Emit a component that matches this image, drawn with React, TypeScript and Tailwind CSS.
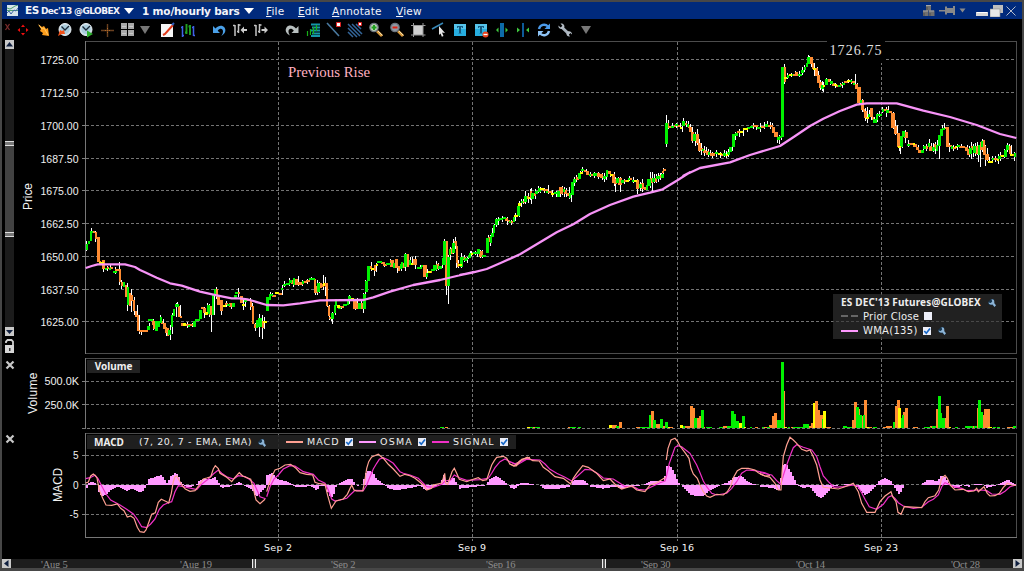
import React from 'react';

type Tone = 'g' | 'o' | 'y';
const TONES: Record<Tone, string> = { g: '#00f000', o: '#ff8c32', y: '#ffff00' };

// Each block of series data is stored in thirds of a pixel, relative to its own origin.
interface Block {
  ox: number;
  oy: number;
  data: string;
}

// tone,x0,x1,y0,y1
const CANDLES: Block[] = [
  {
    ox: 0,
    oy: 200,
    data: `g,257,263,132,150 g,263,269,124,133 g,269,275,93,122 g,272,280,93,99 o,279,286,94,100 o,285,292,95,116 o,292,299,112,187 o,296,301,183,189 y,298,311,186,192 o,307,314,180,206 g,315,321,203,208 o,320,327,200,207 g,326,331,205,209 o,330,340,201,208 g,340,350,212,218 o,345,356,206,212 o,356,363,207,247 o,363,369,245,257 g,369,375,247,262 o,375,382,255,290 g,381,387,260,314 o,387,393,280,318 o,393,399,284,304 o,398,406,301,333 o,405,412,333,352 o,411,418,344,393 o,417,443,390,396 g,442,449,378,390 g,445,458,357,363 o,455,462,360,375 o,459,466,363,388 g,466,473,364,392 g,473,480,362,380 g,480,486,350,368 o,484,490,362,372 o,488,497,370,386 o,494,501,380,398 o,500,506,385,408 g,505,512,390,405 g,513,519,345,382 g,518,525,328,347 g,524,536,312,320 o,534,540,318,350 o,539,546,347,353 o,543,550,368,378 y,549,559,370,377 o,558,570,373,379 g,564,570,374,380 o,570,580,373,379 g,580,587,362,380 g,585,600,357,362 g,598,606,330,358 o,604,613,320,327 o,610,618,325,340 y,616,625,337,345 g,622,630,315,342 o,628,636,318,345 g,636,642,283,345 g,642,648,268,288 o,648,655,268,290 o,652,660,285,315 o,660,668,300,333 y,668,678,316,322 o,675,684,309,315 g,682,689,311,317 o,687,697,309,322 g,696,704,310,320 g,702,710,284,297 g,705,714,276,282 o,713,720,277,283`,
  },
  {
    ox: 240,
    oy: 200,
    data: `o,0,8,288,308 y,5,16,312,318 g,11,20,297,306 o,18,30,297,303 o,30,37,300,320 o,36,42,318,372 o,42,48,372,385 g,47,54,360,385 o,52,57,366,380 g,55,65,353,380 o,65,71,362,385 y,70,80,362,368 g,79,86,290,333 g,86,92,283,300 g,92,100,283,288 o,97,107,285,292 y,105,118,277,283 o,117,126,278,283 g,124,130,263,270 g,129,138,251,258 g,138,150,248,254 g,148,156,240,250 o,154,160,240,252 g,160,166,235,255 o,165,175,237,255 o,175,190,245,255 g,185,191,244,252 o,190,200,243,250 o,197,210,240,247 g,208,224,234,240 o,222,229,238,278 o,228,234,259,280 g,232,240,250,275 o,237,247,248,265 o,245,250,252,262 y,249,256,250,257 o,255,264,250,262 o,258,265,252,318 o,264,270,318,348 o,268,275,350,358 g,274,281,338,358 g,281,287,315,340 g,284,291,298,317 y,290,300,315,325 g,295,303,321,326 o,301,312,318,324 g,310,322,313,318 g,320,328,300,315 g,325,334,288,302 y,332,342,293,299 o,340,350,300,328 o,350,358,310,328 g,355,363,308,328 o,363,371,310,328 g,370,377,282,328 g,376,383,242,275 g,380,389,198,243 o,386,396,198,208 y,393,402,203,209 o,402,409,195,213 y,408,414,192,198 g,410,425,184,190 o,423,434,187,193 o,430,440,191,198 g,437,452,189,195 o,450,462,180,200 g,460,466,188,203 o,465,475,178,204 o,473,481,197,212 g,480,486,192,208 g,484,490,185,205 o,489,493,190,205 g,492,500,162,200 o,499,508,163,200 g,506,513,180,195 y,512,520,190,196 o,518,530,178,196 g,530,545,200,207 g,543,550,195,202 o,550,560,195,232 g,557,565,220,230 y,564,572,213,218 o,570,574,212,217 g,573,585,208,214 g,580,590,195,210 o,588,597,193,207 g,594,606,198,206 g,605,617,175,195 g,609,617,122,180 o,616,624,123,258 g,622,629,170,258 g,628,634,148,165 o,633,637,145,162 g,636,644,128,160 o,642,651,122,138 o,647,654,138,190 o,652,658,188,200 y,655,665,192,198 g,662,669,172,200 o,668,674,173,180 g,673,680,176,182 o,678,685,174,181 g,684,692,168,174 g,688,700,158,164 g,700,713,155,162 g,712,720,147,163`,
  },
  {
    ox: 460,
    oy: 130,
    data: `g,0,7,382,410 y,0,6,402,408 g,6,12,380,387 o,10,18,382,388 g,16,25,383,389 g,24,33,374,380 y,32,39,370,376 g,38,52,366,372 g,52,60,358,372 o,58,68,362,380 g,66,78,375,382 g,78,86,323,370 o,84,90,320,336 g,90,95,318,338 g,93,101,308,322 g,99,106,285,308 g,105,114,268,285 g,112,120,268,274 g,118,130,265,271 g,128,138,260,266 o,134,145,263,272 o,143,150,270,276 g,148,154,273,278 o,152,160,272,278 g,158,165,262,275 y,163,173,255,262 g,172,179,228,258 y,175,183,220,228 g,182,190,214,220 o,188,194,213,220 g,192,200,198,215 o,199,206,198,206 y,204,211,201,207 o,209,215,183,203 g,214,222,188,207 o,220,227,190,198 g,225,235,183,192 g,233,242,174,186 y,240,252,175,181 o,250,264,178,184 g,257,263,182,190 o,263,275,184,190 y,274,283,188,193 g,282,292,185,190 g,290,299,184,200 o,298,310,170,192 g,310,314,178,186 o,312,322,180,192 o,320,330,188,198 g,328,334,188,204 g,333,341,155,195 g,340,349,148,158 o,348,356,142,150 g,355,362,130,148 y,360,369,125,132 g,364,373,117,123 o,372,379,119,126 o,378,388,124,134 g,387,394,133,138 o,393,401,132,138 g,400,410,130,137 o,410,420,130,140 o,420,430,132,144 g,430,437,137,148 g,437,445,120,140 o,443,452,124,132 y,450,460,131,137 o,456,464,132,160 o,462,470,147,162 g,467,477,145,160 o,475,487,145,165 g,483,491,151,158 o,489,499,150,157 y,497,507,150,156 g,505,511,143,150 o,508,517,143,150 g,516,523,149,155 y,521,530,149,155 o,528,538,150,178 g,538,545,163,175 o,543,553,160,178 o,551,558,172,180 g,557,565,165,180 g,562,572,148,168 o,571,579,144,160 g,577,584,145,157 o,583,590,143,155 g,588,600,138,148 o,596,606,134,143 g,604,611,133,143 o,607,613,122,129 o,610,618,117,124`,
  },
  {
    ox: 650,
    oy: 40,
    data: `g,46,53,248,312 o,52,58,250,260 o,55,65,257,263 g,64,72,257,263 o,71,77,254,260 g,76,83,252,258 o,82,91,254,262 y,90,97,261,267 g,95,105,243,258 o,105,111,248,255 g,110,116,252,260 o,114,120,255,265 o,117,125,262,275 o,123,131,275,302 g,130,138,283,302 o,138,146,281,310 o,144,153,308,332 o,152,160,323,331 g,155,162,327,334 o,160,169,331,340 o,168,176,333,345 g,174,181,337,345 o,180,195,340,347 g,195,204,335,341 y,203,215,340,346 o,212,221,341,348 g,219,229,339,347 y,228,234,342,348 g,232,239,335,345 g,238,246,320,337 g,246,255,283,320 g,254,264,278,288 o,262,270,273,279 y,269,280,272,278 y,280,293,264,270 g,291,300,261,267 g,299,310,257,263 o,309,324,256,262 g,322,333,260,267 o,332,345,257,264 g,345,353,252,262 o,353,368,254,262 o,366,375,262,278 o,373,383,277,292 g,380,390,292,299 g,388,396,288,295 g,393,401,82,290 o,399,407,80,104 o,402,407,102,125 y,402,411,110,118 g,410,418,106,113 y,417,425,103,109 g,424,430,103,108 o,428,436,102,108 o,435,445,95,107 g,444,456,101,108 g,454,463,90,100 g,461,469,80,90 g,467,474,70,82 g,472,481,52,73 o,478,488,52,73 o,486,493,70,86 y,490,497,83,89 o,494,503,84,108 o,500,510,104,130 o,508,517,126,144 g,513,521,136,146 y,518,526,134,140 g,525,535,118,134 o,533,541,118,126 g,540,548,124,132 o,545,555,129,138 y,553,560,133,139 o,559,566,134,140 g,563,572,134,140 o,571,577,133,139 g,576,585,128,134 o,583,595,123,129 y,592,600,120,126 g,598,606,120,126 o,604,614,122,130 g,610,616,128,134 o,614,623,132,146 o,622,632,142,190 g,629,635,180,188 o,632,641,180,210 o,639,646,208,216 o,643,652,213,235 y,648,656,232,238 g,654,660,223,232 o,659,668,205,232 o,666,671,230,240 g,670,680,238,248 g,677,685,223,240 g,684,697,222,228 g,696,702,208,216 o,700,714,208,214 g,708,716,210,218 o,714,725,213,219 o,724,734,218,263 o,733,742,257,282 o,740,749,280,320 y,745,754,317,323 g,750,758,288,320 g,757,765,274,290 o,763,773,275,293 g,770,779,312,317 o,778,789,310,316 y,788,794,310,316 o,790,800,312,320 o,797,806,322,330 o,804,816,330,338 g,813,821,330,338 g,819,829,319,326 o,827,834,318,326 g,833,839,310,322 o,838,847,317,333 g,846,854,322,333 o,853,859,312,328 g,857,864,314,332 g,863,872,285,318 g,870,878,268,287 g,877,885,263,270 o,884,890,262,268 o,888,897,262,322 o,894,905,316,322 g,903,909,319,326 o,908,917,321,328 y,915,921,319,325 g,920,929,314,320 o,928,946,318,324 o,944,953,320,332 o,951,959,328,345 g,957,965,325,343 o,963,970,317,330 g,969,977,318,340 o,976,986,318,342 g,983,991,316,345 o,991,998,305,330 g,992,997,302,320 o,998,1004,300,320 o,1000,1008,318,345 o,1006,1016,342,360 y,1014,1030,363,369 g,1026,1033,353,360 o,1032,1042,355,361 y,1040,1048,356,362 g,1044,1052,347,356 o,1051,1057,344,352 y,1054,1062,346,352 g,1061,1070,330,352 g,1068,1078,316,330 o,1076,1083,318,342 y,1081,1090,342,348 o,1087,1095,342,348 g,1093,1099,339,350`,
  },
];

// x,y0,y1
const WICKS: Block[] = [
  {
    ox: 0,
    oy: 200,
    data: `260,122,152 274,84,122 286,92,126 310,180,216 322,198,212 331,196,210 346,202,222 358,186,256 364,240,268 382,250,332 394,268,336 403,292,346 412,315,366 418,345,402 424,390,404 448,368,390 460,358,390 466,362,392 481,345,370 490,358,386 500,380,408 511,375,419 517,340,402 529,309,350 532,306,322 541,316,355 562,366,384 577,368,382 598,350,362 613,322,355 622,310,346 628,312,350 634,318,395 643,276,345 649,262,296 664,300,344 679,302,320 694,308,328 715,264,290`,
  },
  {
    ox: 240,
    oy: 200,
    data: `10,296,330 16,300,322 31,294,330 37,310,340 46,370,392 58,343,410 67,346,416 73,350,388 91,277,300 97,280,292 127,256,285 133,244,262 148,234,258 160,235,262 175,228,258 187,240,258 202,236,252 214,231,240 226,238,284 232,240,286 238,246,280 250,225,270 256,231,288 262,248,322 268,315,360 274,340,362 277,335,372 286,298,345 304,318,326 328,286,312 346,298,330 352,294,328 364,298,325 370,280,338 376,240,306 394,186,214 403,195,227 409,188,215 433,186,200 451,178,198 460,180,204 472,176,218 484,190,213 496,158,212 511,172,196 517,170,196 526,168,206 541,196,208 553,195,230 559,196,238 562,206,232 589,182,212 595,188,210 607,175,205 613,116,195 619,124,285 625,165,312 631,140,180 640,118,162 646,110,146 649,130,204 656,180,204 664,166,203 682,172,188 694,152,168 713,150,172`,
  },
  {
    ox: 460,
    oy: 130,
    data: `4,368,414 13,375,395 25,376,388 31,362,376 46,362,376 61,360,384 67,360,383 85,315,370 91,314,348 97,295,322 103,282,308 109,263,290 115,260,285 127,258,276 142,260,285 154,270,284 166,250,274 172,252,262 178,212,262 184,208,230 190,206,222 196,184,222 205,190,220 211,176,210 214,174,222 226,178,206 235,168,190 241,170,190 253,174,188 265,164,192 277,180,200 289,182,200 301,175,200 307,168,194 313,172,202 319,175,202 329,172,208 335,158,215 343,142,168 349,136,156 355,128,150 361,124,148 367,111,126 379,118,135 391,126,142 403,126,145 415,126,146 427,128,150 433,130,155 439,120,150 451,122,140 463,125,168 466,140,186 475,142,160 481,142,186 493,146,162 508,138,152 520,142,160 532,148,192 541,155,182 547,148,186 562,155,172 571,142,175 577,126,187 583,138,160 589,136,154 595,132,155 601,130,150 610,114,144`,
  },
  {
    ox: 650,
    oy: 40,
    data: `2,395,430 7,400,455 13,402,422 19,402,428 25,400,420 34,400,414 40,384,412 49,225,320 55,240,266 67,250,264 79,248,264 91,250,267 97,246,276 100,235,258 109,242,260 115,242,264 121,252,276 127,262,308 136,275,318 142,266,316 148,296,335 154,310,345 163,318,348 169,320,345 175,328,352 181,330,346 187,336,354 199,330,350 211,336,354 223,330,352 229,332,354 235,328,350 247,310,332 256,276,300 268,268,290 280,265,288 292,260,276 310,248,268 319,254,270 331,250,276 343,246,266 352,242,258 361,246,268 367,250,278 373,262,290 382,275,308 388,286,312 394,260,300 403,72,132 412,100,116 424,98,112 436,94,108 448,92,112 457,82,106 463,76,96 475,45,70 479,48,65 484,60,82 493,68,108 502,82,122 505,92,130 511,120,150 517,122,152 520,125,155 529,115,132 541,118,135 556,130,145 571,128,142 577,126,145 595,116,130 604,116,132 616,102,142 622,128,165 628,140,196 637,176,216 646,205,242 652,200,248 658,210,230 664,205,240 673,230,250 682,218,245 688,214,232 697,200,220 709,200,230 715,198,220 730,215,268 736,240,285 742,256,300 748,290,334 751,290,342 757,274,325 766,270,308 775,300,320 793,308,320 805,316,330 820,316,338 829,312,332 838,298,328 844,310,332 850,308,336 856,306,342 862,300,332 868,290,356 877,256,285 883,250,268 889,260,322 898,308,335 910,316,334 922,312,330 934,312,325 952,315,346 958,318,352 964,306,358 970,312,350 976,308,348 982,305,345 986,318,366 991,310,380 997,296,335 1006,314,378 1012,324,364 1018,350,370 1027,348,368 1036,348,366 1045,342,372 1051,336,362 1063,328,354 1072,310,336 1078,312,338 1084,316,345 1094,336,362`,
  },
];

const WMA: Block[] = [
  { ox: 0, oy: 200, data: '257,204 275,198 293,193 375,193 405,201 420,210 435,217 470,233 510,250 545,257 600,275 650,286 695,295 718,295' },
  { ox: 240, oy: 200, data: '22,298 40,303 80,315 130,316 180,310 240,301 370,300 400,292 450,275 520,255 600,240 650,228 700,216' },
  { ox: 460, oy: 130, data: '0,435 40,427 80,417 120,400 180,373 240,337 290,307 340,283 390,252 450,225 520,200 570,188 608,178 624,168 650,152 690,127' },
  { ox: 650, oy: 40, data: '100,407 150,384 240,367 300,345 390,318 430,292 480,258 520,236 570,213 620,194 650,190 740,190 820,212 900,231 980,255 1050,282 1099,294' },
];

const VOLUMES: Block[] = [
  { ox: 0, oy: 350, data: 'g,1320,1332,232 o,1336,1344,231 g,1584,1596,232' },
  {
    ox: 510,
    oy: 350,
    data: `y,51,60,231 g,58,68,231 o,68,76,231 g,76,90,231 o,174,180,231 g,180,198,231 g,205,213,231 y,297,307,225 o,306,321,225 g,318,328,228 o,327,336,216 o,378,390,231 g,390,416,231 g,416,424,195 o,423,432,183 g,430,438,210 o,438,450,222 g,450,459,207 o,459,466,228 g,465,474,216 y,474,480,231 o,480,488,231 y,510,519,225 g,517,525,229 o,525,540,228 o,540,548,168 o,547,555,174 g,553,560,204 o,559,568,204 o,567,573,198 g,573,582,180 o,579,585,231 g,588,606,231 g,627,640,231 o,640,652,228 g,652,663,229 g,663,672,183 g,671,678,192 g,677,686,213 y,686,696,219 g,696,705,198 y,702,708,231 g,720,727,231 o,735,744,231`,
  },
  {
    ox: 760,
    oy: 350,
    data: `g,5,12,231 o,8,24,230 g,22,30,231 o,28,36,225 o,36,43,198 o,42,51,189 g,51,63,210 g,63,72,36 o,67,75,123 y,72,80,231 g,83,90,232 o,92,100,232 g,98,129,232 g,129,147,222 o,145,153,228 o,152,159,219 y,158,166,159 o,165,174,153 o,173,180,180 o,180,190,195 g,186,190,207 y,189,198,183 o,198,213,231 g,250,262,229 g,262,275,231 o,275,283,210 o,282,291,156 g,288,297,171 o,295,300,177 g,297,306,195 o,303,312,198 g,308,312,195 o,312,321,150 y,318,326,231 o,326,335,231 g,340,350,232 o,370,378,231 o,378,397,229 g,398,405,216 o,405,412,168 o,411,420,150 y,414,423,174 g,420,429,204 g,426,431,195 o,429,436,186 o,435,444,174 o,460,474,231 g,492,512,230 o,510,518,229 g,517,527,228 o,527,535,177 g,534,543,138 g,541,547,189 g,546,555,204 o,553,560,204 o,558,567,168 y,567,573,231 g,585,595,231 g,615,640,229 o,637,645,229 g,642,651,227 o,650,655,174 g,654,663,150 g,662,669,186 o,667,674,196 o,672,690,177 y,685,696,231 g,700,708,232 g,712,720,232 o,740,760,231 g,760,768,229`,
  },
];

const MACD_LINE: Block[] = [
  { ox: 0, oy: 340, data: '257,429 265,426 272,408 280,402 286,407 291,414 298,450 308,475 318,495 335,496 352,492 362,505 372,512 382,531 392,528 402,535 412,562 420,575 432,577 438,570 447,545 455,523 466,518 475,487 484,478 500,485 506,489 514,460 520,425 525,410 530,408 537,420 545,435 556,447 570,454 585,452 600,432 610,417 620,414 632,410 640,387 646,377 655,386 660,400 680,412 695,425 705,412 718,398 728,408 752,418 760,445 768,480 780,491 795,478' },
  { ox: 260, oy: 425, data: '20,200 26,180 35,155 45,135 60,130 75,120 92,118 108,130 120,143 140,148 158,150 165,172 178,176 195,178 203,212 214,250 228,228 250,222 262,208 275,180 282,195 290,198 308,198 314,170 320,130 326,110 335,96 355,88 372,102 385,118 400,132 420,154 435,148 450,152 465,160 480,172 492,182 500,195 515,190 520,180 545,174 549,162 554,145 557,175 563,178 570,158 576,140 583,130 590,145 598,163 620,170 635,164 655,158 668,167 680,164 695,120 703,107 710,97 730,94 740,100 750,118 768,123 785,103 810,97' },
  { ox: 510, oy: 350, data: '0,342 12,349 30,332 52,322 68,332 88,333 100,352 115,362 135,380 160,385 182,402 190,385 200,370 218,347 235,352 260,370 280,392 300,387 320,408 335,417 365,408 380,420 405,425 420,405 440,398 467,382' },
  { ox: 510, oy: 350, data: '469,330 474,295 483,270 495,265 503,275 510,288 525,308 537,325 543,355 550,372 562,385 570,405 580,425 590,438 600,442 620,433 640,435 652,425 662,408 670,383 682,362 695,355 715,355 735,360 745,368 765,378 780,377' },
  { ox: 760, oy: 350, data: '0,372 15,378 30,382 45,400 55,420 63,420 66,370 70,320 80,285 90,262 100,270 110,280 125,298 140,303 150,300 160,320 170,345 180,390 190,412 235,417 255,410 280,400 295,425 305,460 320,487 345,487 360,455 375,438 393,425 398,440 408,455 414,487 423,493 433,470 485,473 495,455 505,443 525,437 536,420 545,385 555,376 562,385 572,407 585,420 610,418 625,425 642,423 650,415 655,425 672,410 682,430 690,438 705,437 718,430 730,412 742,400 755,405 768,406' },
];

const SIGNAL_LINE: Block[] = [
  { ox: 0, oy: 340, data: '257,416 270,413 285,406 294,416 305,438 318,462 332,480 360,495 380,508 400,522 412,538 425,560 440,563 452,552 465,537 478,508 490,495 505,488 515,485 525,455 535,437 560,442 590,449 602,435 625,417 640,402 655,390 665,400 680,410 700,417 715,407 735,410 748,418 762,430 780,470 797,476' },
  { ox: 260, oy: 425, data: '20,215 30,185 42,162 55,150 70,132 90,122 105,123 130,140 160,148 175,165 195,175 205,195 215,222 225,228 240,225 260,220 270,210 285,196 310,197 320,180 330,155 340,132 350,115 358,103 370,98 385,105 400,115 420,140 430,145 450,150 475,160 500,185 520,187 545,178 556,168 572,165 583,150 598,158 620,166 660,164 685,160 695,145 705,128 720,110 735,102 750,110 765,116 785,108 810,98' },
  { ox: 510, oy: 350, data: '0,335 20,345 50,328 90,330 105,342 120,358 140,370 165,382 185,393 200,380 225,358 245,360 265,372 280,384 310,387 330,400 345,410 370,410 385,418 405,420 425,410 450,398 465,393 470,375 478,340 487,315 495,292 503,287 515,290 530,302 540,310 560,345 570,368 580,393 590,410 605,430 620,435 650,430 665,415 680,395 695,370 710,360 735,362 765,368 780,375' },
  { ox: 760, oy: 350, data: '0,367 20,372 35,375 50,392 62,403 72,370 82,340 90,318 100,293 110,284 130,292 155,300 170,320 180,350 190,378 205,395 222,412 250,410 280,405 292,407 305,428 315,448 328,470 350,478 370,463 385,442 395,437 405,445 415,458 430,468 460,475 485,472 505,455 520,448 535,435 545,410 555,398 565,402 580,410 605,415 620,422 665,420 680,422 695,432 720,433 735,424 750,410 768,405' },
];

const OSMA: { ox: number; zero: number; data: string }[] = [
  { ox: 0, zero: 434, data: '257,452 262,440 268,427 280,425 290,430 296,455 308,468 320,462 335,447 350,440 365,442 380,452 400,445 420,458 432,450 440,434 447,415 465,410 482,404 492,413 503,430 512,408 525,399 535,404 542,425 560,442 575,440 590,432 600,418 625,416 638,414 645,410 655,425 665,442 690,440 700,434 718,424 730,436 745,440 757,450 768,468 780,458 797,440 800,405' },
  { ox: 260, zero: 179, data: '20,150 38,143 50,160 70,165 90,173 110,186 150,183 160,188 170,195 182,180 198,185 208,210 215,218 222,205 230,180 262,162 275,160 290,182 308,178 315,150 322,136 338,140 350,160 370,175 385,190 410,195 450,188 480,182 500,195 515,188 540,178 552,150 560,175 580,155 600,190 640,185 678,180 690,160 710,152 735,170 760,192 790,172 810,175' },
  { ox: 510, zero: 404, data: '0,415 15,405 35,396 60,400 90,406 105,416 150,415 180,408 190,390 220,388 240,408 280,415 320,408 335,416 370,408 400,404 420,393 464,392 467,345 485,350 495,370 505,395 520,412 545,435 580,438 600,420 630,404 650,398 670,382 695,376 710,392 735,402 780,408' },
  { ox: 760, zero: 404, data: '0,410 35,412 50,420 62,420 64,343 80,342 95,370 110,400 125,413 150,410 170,435 185,443 200,430 215,410 240,404 270,400 285,405 300,420 315,434 330,425 345,410 355,393 375,384 395,392 402,410 418,432 430,412 435,404 485,404 490,397 505,388 530,392 545,376 558,382 570,405 590,414 610,404 628,410 632,404 665,400 680,412 700,408 720,398 742,387 755,395 768,404' },
];

const rows = (s: string) => s.trim().split(/\s+/).map((r) => r.split(','));
const r3 = (v: number) => Math.round(v / 3);

function candlePath(tone: Tone) {
  let d = '';
  CANDLES.forEach((b) =>
    rows(b.data).forEach(([t, x0, x1, y0, y1]) => {
      if (t !== tone) return;
      const l = b.ox + r3(+x0);
      const w = Math.max(2, r3(+x1) - r3(+x0));
      const top = b.oy + r3(+y0);
      const h = Math.max(2, r3(+y1) - r3(+y0));
      d += `M${l} ${top}h${w}v${h}h${-w}z`;
    }),
  );
  return d;
}

function wickPath() {
  let d = '';
  WICKS.forEach((b) =>
    rows(b.data).forEach(([x, y0, y1]) => {
      d += `M${b.ox + Math.floor(+x / 3)} ${b.oy + r3(+y0)}h1v${r3(+y1) - r3(+y0)}h-1z`;
    }),
  );
  return d;
}

function volumePath(tone: Tone) {
  let d = '';
  VOLUMES.forEach((b) =>
    rows(b.data).forEach(([t, x0, x1, y0]) => {
      if (t !== tone) return;
      const w = Math.max(2, r3(+x1) - r3(+x0));
      const top = b.oy + r3(+y0);
      d += `M${b.ox + r3(+x0)} ${top}h${w}V428h${-w}z`;
    }),
  );
  return d;
}

const points = (b: Block) =>
  rows(b.data)
    .map(([x, y]) => `${(b.ox + +x / 3).toFixed(1)},${(b.oy + +y / 3).toFixed(1)}`)
    .join(' ');

function osmaPath() {
  let d = '';
  OSMA.forEach((b) => {
    const pts = rows(b.data).map(([x, y]) => [b.ox + +x / 3, (+y - b.zero) / 3]);
    const end = pts[pts.length - 1][0];
    for (let x = Math.round(pts[0][0]); x < end; x += 2) {
      let i = 0;
      while (i < pts.length - 2 && pts[i + 1][0] < x + 1) i++;
      const [xa, ya] = pts[i];
      const [xb, yb] = pts[i + 1];
      const k = Math.min(1, Math.max(0, (x + 1 - xa) / (xb - xa)));
      const v = Math.round(ya + (yb - ya) * k);
      if (v < 0) d += `M${x} ${485 + v}h2V485h-2z`;
      if (v > 0) d += `M${x} 485h2v${v}h-2z`;
    }
  });
  return d;
}

const PRICE_TICKS: [string, number][] = [
  ['1725.00', 59], ['1712.50', 92], ['1700.00', 125], ['1687.50', 158], ['1675.00', 190],
  ['1662.50', 223], ['1650.00', 256], ['1637.50', 289], ['1625.00', 321],
];
const DATE_TICKS: [string, number][] = [['Sep 2', 278], ['Sep 9', 472], ['Sep 16', 677], ['Sep 23', 881]];
const LOWER_TICKS: [string, number][] = [['500.0K', 381], ['250.0K', 404], ['5', 455], ['0', 484], ['-5', 514]];

function Chart() {
  const grid = [...PRICE_TICKS, ...LOWER_TICKS];
  return (
    <svg width="1004" height="520" viewBox="16 40 1004 520" className="block font-['Liberation_Sans',sans-serif]">
      <g shapeRendering="crispEdges" fill="none">
        <path d="M1016.5 41v313M1016.5 358v71M1016.5 433v105" stroke="#4c4c4c" />
        <path d="M85 41.5h932M85 353.5h932M85 358.5h932M85 433.5h932" stroke="#4c4c4c" />
        <path d="M85.5 41v313M85.5 358v71M85.5 433v105M85 537.5h932" stroke="#777" />
        {grid.map(([t, y]) => (
          <g key={t}>
            <path d={`M82 ${y + 0.5}h4`} stroke="#808080" />
            <path d={`M86 ${y + 0.5}h930`} stroke="#747474" strokeDasharray="3 2" />
          </g>
        ))}
        <path d="M82 428.5h934" stroke="#777" strokeDasharray="3 2" />
        {DATE_TICKS.map(([t, x]) => (
          <path key={t} d={`M${x + 0.5} 42V353M${x + 0.5} 359V428M${x + 0.5} 434V541`} stroke="#747474" strokeDasharray="3 2" />
        ))}
      </g>
      <rect x="827" y="41" width="58" height="22" fill="#000" />

      <g shapeRendering="crispEdges">
        <path d={wickPath()} fill="#fff" />
        <path d={candlePath('o')} fill={TONES.o} />
        <path d={candlePath('g')} fill={TONES.g} />
        <path d={candlePath('y')} fill={TONES.y} />
        <path d={volumePath('o')} fill={TONES.o} />
        <path d={volumePath('g')} fill={TONES.g} />
        <path d={volumePath('y')} fill={TONES.y} />
        <path d={osmaPath()} fill="#ff99ff" />
      </g>
      <polyline points={WMA.map(points).join(' ')} fill="none" stroke="#f793f7" strokeWidth="2.3" strokeLinejoin="round" />
      {SIGNAL_LINE.map((b, i) => (
        <polyline key={i} points={points(b)} fill="none" stroke="#f230c8" strokeWidth="1.2" />
      ))}
      {MACD_LINE.map((b, i) => (
        <polyline key={i} points={points(b)} fill="none" stroke="#ffa092" strokeWidth="1.2" />
      ))}

      <g fill="#f0f0f0" fontSize="10">
        {PRICE_TICKS.map(([t, y]) => (
          <text key={t} x="40.500" y={y + 5} textLength="38" lengthAdjust="spacingAndGlyphs">{t}</text>
        ))}
        <text x="44.500" y="385" textLength="34.5" lengthAdjust="spacingAndGlyphs">500.0K</text>
        <text x="44.500" y="409" textLength="34.5" lengthAdjust="spacingAndGlyphs">250.0K</text>
        <text x="78.500" y="459" textAnchor="end">5</text>
        <text x="78.500" y="489" textAnchor="end">0</text>
        <text x="78.500" y="518" textAnchor="end">-5</text>
      </g>
      <g fill="#f2f2f2" fontSize="12">
        <text transform="translate(32 210) rotate(-90)" textLength="27">Price</text>
        <text transform="translate(37 414) rotate(-90)" textLength="41.500">Volume</text>
        <text transform="translate(62 502) rotate(-90)" textLength="34" lengthAdjust="spacingAndGlyphs">MACD</text>
      </g>
      <g className="font-['DejaVu_Sans',sans-serif]" fill="#f4f4f4" fontSize="9.500">
        {DATE_TICKS.map(([t, x]) => (
          <text key={t} x={t.length > 5 ? x - 17 : x - 14} y="551" textLength={t.length > 5 ? 34 : 28}>{t}</text>
        ))}
      </g>
      <g className="font-['Liberation_Serif',serif]">
        <text x="288" y="77" fontSize="14.500" fill="#ffb0c0" textLength="82" lengthAdjust="spacingAndGlyphs">Previous Rise</text>
        <text x="829.500" y="55" fontSize="14" fill="#e0e0e0" textLength="52">1726.75</text>
      </g>
    </svg>
  );
}

function Icon({ children, size = 16, className = '' }: { children: React.ReactNode; size?: number; className?: string }) {
  return (
    <svg width={size} height={size} viewBox={`0 0 ${size} ${size}`} className={`block shrink-0 ${className}`} fill="none">
      {children}
    </svg>
  );
}

function Tool({ children, className = '' }: { children: React.ReactNode; className?: string }) {
  return (
    <button className={`flex w-[21px] shrink-0 items-center justify-center ${className}`}>
      <Icon>{children}</Icon>
    </button>
  );
}

function ClockFace() {
  return (
    <>
      <circle cx="8" cy="7.500" r="6" fill="#c9dfeb" stroke="#e8eef2" />
      <circle cx="8" cy="7.500" r="4.600" fill="#a9cbdb" />
      <path d="M4.500 4.500L8 8l4-4" stroke="#182838" strokeWidth="1.300" />
    </>
  );
}

function Lens({ minus = false }: { minus?: boolean }) {
  return (
    <>
      <path d="M9 9l5 5" stroke="#d99a3c" strokeWidth="2.800" />
      <path d="M10 9l4.500 4.500" stroke="#f5e0b0" strokeWidth="1" />
      <circle cx="6" cy="5.500" r="4.200" fill={minus ? '#8f9aa5' : '#b8cdb4'} stroke="#6d7680" strokeWidth="1.200" />
      {minus ? (
        <path d="M3.500 5.500h5" stroke="#e02010" strokeWidth="2" />
      ) : (
        <path d="M3.500 5.500h5M6 3v5" stroke="#1fa01f" strokeWidth="2" />
      )}
    </>
  );
}

function BarsGlyph({ dir }: { dir: 'left' | 'right' }) {
  return (
    <>
      <path d="M3 3v11M1 3.500h2M6.500 2v9M5 9.500h1.500M6.500 3h2" stroke="#c4c4c4" strokeWidth="1.500" />
      {dir === 'left' ? (
        <path d="M15 7v2h-3v2.500L8.500 8 12 4.500V7z" fill="#ccc" />
      ) : (
        <path d="M8.500 7v2h3v2.500L15 8l-3.500-3.500V7z" fill="#ccc" />
      )}
    </>
  );
}

function Toolbar() {
  return (
    <div className="flex h-[22px] shrink-0 items-center pl-[2px]">
      <div className="flex h-full w-[8px] shrink-0 items-start pt-[4px]">
        <Icon size={8}><path d="M1.500 1l4 6M5.500 1l-4 6" stroke="#7a2c2c" strokeWidth="1.300" /></Icon>
      </div>
      <Tool><path d="M8 2.500L6 5h4zM8 13.500L6 11h4zM2.500 8L5 6v4zM13.500 8L11 6v4z" fill="#f01010" /></Tool>
      <Tool>
        <path d="M2 2l4 3 2-1 2 3 2-1 1 8-7-1 1-2-3-2 1-2z" fill="#ff9d1c" />
        <path d="M3 3l3 4 2-1 4 7" stroke="#ffc860" />
      </Tool>
      <Tool><ClockFace /><path d="M1 14l2-6 2 1 2-1 1 4-3 0z" fill="#f05018" /></Tool>
      <Tool><ClockFace /><path d="M9 8.500l6 3.500-6 3.500z" fill="#2cae2c" /></Tool>
      <Tool><path d="M8.500 2v13M2 8.500h13" stroke="#6a4020" strokeWidth="1.400" /><path d="M8.500 6v5M6 8.500h5" stroke="#b06a24" strokeDasharray="1 1" /></Tool>
      <Tool><path d="M1 1h6v6H1zM8 1h6v6H8zM1 8h6v6H1zM8 8h6v6H8z" fill="#a8a8a8" /><path d="M2 4.500h4M9 4.500h4M2 11.500h4M9 11.500h4" stroke="#c8c8c8" /></Tool>
      <button className="flex w-[14px] shrink-0 justify-center"><Icon size={10}><path d="M0 1h10L5 9z" fill="#777" /></Icon></button>
      <Tool className="ml-[4px]">
        <path d="M2 2h12v13H2z" fill="#f6f6f6" /><path d="M4 13l2-1 8-9" stroke="#e03818" strokeWidth="2" /><path d="M13 3l2-2" stroke="#3060c0" strokeWidth="2" />
      </Tool>
      <Tool>
        <path d="M2.500 4v11M1 5.500h1.500M2.500 13.500H4" stroke="#3f62e8" strokeWidth="1.500" />
        <path d="M6.500 2v10M5 10.500h1.500M10 3v10M8.500 4.500H10" stroke="#22a022" strokeWidth="1.900" />
        <path d="M13.500 4v10M12 5.500h1.500M13.500 13.500H15" stroke="#3f62e8" strokeWidth="1.500" />
      </Tool>
      <Tool className="ml-[10px]">
        <path d="M2 4v7h7L6.700 8.700C9 5.800 12 6.500 12 9.500c0 2-1 3.500-2 4.500 4-2 5.500-5.500 3.500-8.500C11.500 3 7.500 3 4.500 6.500z" fill="#4aa0e8" />
      </Tool>
      <Tool><BarsGlyph dir="left" /></Tool>
      <Tool><BarsGlyph dir="right" /></Tool>
      <Tool className="ml-[10px]">
        <path d="M14.500 4v7h-7l2.300-2.300C7.500 5.800 4.500 6.500 4.500 9.500c0 1.500.6 2.800 1.500 4C2.500 12 .5 8.500 2.500 5.500 4.500 2.500 9 3 12 6.500z" fill="#b9c0c0" />
      </Tool>
      <Tool>
        <path d="M6 2.500h9M7 5.500h8M6 8.500h9M7 11.500h8M6 14h9" stroke="#1596a8" strokeWidth="1.800" />
        <path d="M2.500 9v5M5.500 7v6M8.500 5v7M11.500 3v6" stroke="#18b018" strokeWidth="1.200" />
      </Tool>
      <Tool><path d="M1 1l12 13" stroke="#4a7aa0" strokeWidth="1.600" /><path d="M10.500.500h4v4h-4z" fill="#fff" stroke="#e02020" /></Tool>
      <Tool>
        <path d="M1 2l12 12M1 6l9 9M5 2l10 10M1 10l5 5M9 2l5 5" stroke="#34669a" strokeWidth="1.500" /><path d="M11.500.500h3v3h-3z" fill="#fff" stroke="#e02020" />
      </Tool>
      <Tool><Lens /></Tool>
      <Tool><Lens minus /></Tool>
      <Tool><path d="M3.500 3.500h9.500v9.500H3.500z" fill="#cfcfcf" /><path d="M3.500 1v14M13 1v14M1 3.500h14.500M1 13h14.500" stroke="#999" /></Tool>
      <Tool><path d="M1 7L12 1" stroke="#3888b8" strokeWidth="1.500" /><path d="M8 4l6 7-3-.4 1.500 3.400-1.600.7L9.500 11.500 8 13z" fill="#e8e8e8" /></Tool>
      <Tool>
        <path d="M2 2h12v12H2z" fill="#27aee0" /><path d="M2 2h12v5H2z" fill="#57c4ec" /><path d="M5 4h6v2h-.7L9.500 5H9v6l1 .5H6l1-.5V5h-.5L5.700 6H5z" fill="#155a80" />
      </Tool>
      <Tool>
        <path d="M2 2h12v12H2z" fill="#27aee0" /><path d="M2 2h12v5H2z" fill="#57c4ec" /><path d="M5 4h6v2h-.7L9.500 5H9v6l1 .5H6l1-.5V5h-.5L5.700 6H5z" fill="#155a80" />
        <circle cx="12.500" cy="12.500" r="3" fill="#e8401c" /><path d="M10.500 12.500h4" stroke="#fff" strokeWidth="1.300" />
      </Tool>
      <Tool><path d="M6 1h4v14H6z" fill="#0d6aa8" /><path d="M4.500 5.500v5L2 8zM11.500 5.500v5L14 8z" fill="#3fc83f" /></Tool>
      <Tool><path d="M7 1h2v14H7z" fill="#0d5a98" /><path d="M2 5.500v5L5 8zM14 5.500v5L11 8z" fill="#3fc83f" /></Tool>
      <Tool>
        <path d="M3 7c1-4.500 6-5.500 9-2.500" stroke="#4c9bea" strokeWidth="2.400" /><path d="M14 1.500V7H8.500z" fill="#4c9bea" />
        <path d="M13 9c-1 4.500-6 5.500-9 2.500" stroke="#8ec4f6" strokeWidth="2.400" /><path d="M2 14.500V9h5.500z" fill="#8ec4f6" />
      </Tool>
      <Tool>
        <path d="M4.500 5l7.500 7" stroke="#a9b3bd" strokeWidth="3" />
        <path d="M3.500 1.500c2.500-.5 4.500 1.500 3.800 4L5.500 7C3 7.500 1 6 1.500 3.500L3.500 5.500 5.500 4zM13 14.500c-2.500.2-4-1.500-3.500-3.500l1.800-1.800c2-.4 4 1 3.700 3.300L13.300 11 11.800 12.500z" fill="#b4bdc6" />
      </Tool>
      <button className="flex w-[21px] shrink-0 justify-center"><Icon size={10}><path d="M0 1h10L5 9z" fill="#777" /></Icon></button>
    </div>
  );
}

function TitleBar() {
  return (
    <header className="flex h-[17px] shrink-0 items-center bg-[#002a7c] pr-[6px] pl-[5px] font-['DejaVu_Sans',sans-serif] text-[11px] leading-[16px] text-[#f2f4fa]">
      <Icon size={11}>
        <path d="M0 0h11v11H0z" fill="#d5e4ea" />
        <path d="M0 3l3 1 2-1 3-2 3-1M0 5.500h11" stroke="#50a070" /><path d="M0 8l2-2 2 3 3-4 2 1 2-3" stroke="#3b65a5" />
      </Icon>
      <div className="ml-[7px] flex w-[109px] items-baseline font-bold">
        <span className="w-[16px] text-[10.5px] tracking-[-0.5px]">ES</span>
        <span className="w-[79px] text-[9px] tracking-[-0.6px] whitespace-nowrap">Dec'13 @GLOBEX</span>
        <Icon size={10} className="ml-auto self-center"><path d="M0 2h10L5 8z" fill="#fff" /></Icon>
      </div>
      <div className="ml-[8px] flex w-[112px] items-center font-bold">
        <span className="text-[10.5px] tracking-[-0.18px] whitespace-nowrap">1 mo/hourly bars</span>
        <Icon size={10} className="ml-auto"><path d="M0 2h10L5 8z" fill="#fff" /></Icon>
      </div>
      <nav className="ml-[12px] flex text-[10.5px] tracking-[0.2px]">
        <span className="w-[32px]"><u>F</u>ile</span>
        <span className="w-[34px]"><u>E</u>dit</span>
        <span className="w-[64px]"><u>A</u>nnotate</span>
        <span><u>V</u>iew</span>
      </nav>
      <div className="ml-auto flex items-center">
        <Icon size={13}>
          <path d="M4 1h5v5.500H4zM1 6.500h5.500V12H1zM7 6.500h5.500V12H7z" fill="#707070" /><path d="M4 1.500h5M1 7h5M7 7h5" stroke="#a5a5a5" /><path d="M5 3v3M2 9v3M8 9v3" stroke="#4c4c4c" />
        </Icon>
        <svg width="17" height="11" viewBox="0 0 17 11" className="ml-[4px]">
          <path d="M0 5h7v1.500H0zM6 1.500h2v8H6zM8 3h6v5H8zM14 1h2v9h-2z" fill="#898989" />
        </svg>
        <Icon size={7} className="ml-[3px]"><path d="M.500 1.500h6L3.500 5.500z" fill="#8b8b8b" /></Icon>
        <svg width="12" height="11" viewBox="0 0 12 11" className="ml-[10px]"><path d="M0 7h12v4H0z" fill="#d8d8d8" /><path d="M1 7h10v1H1z" fill="#fff" /></svg>
        <svg width="13" height="12" viewBox="0 0 13 12" className="ml-[2px]"><path d="M3 0h10v8H3z" fill="#bdbdbd" /><path d="M0 4h10v8H0z" fill="#e8e8e8" stroke="#888" strokeWidth=".6" /></svg>
        <Icon size={10} className="ml-[3px]"><path d="M.500.500l9 9M9.500.500l-9 9" stroke="#b5bccb" /></Icon>
      </div>
    </header>
  );
}

function Check({ on = true }: { on?: boolean }) {
  return (
    <span className="flex h-[8px] w-[8px] shrink-0 items-center justify-center bg-[#eceef8]">
      {on && <Icon size={8}><path d="M1.300 4l2 2.200L7 1.500" stroke="#1668c8" strokeWidth="1.700" /></Icon>}
    </span>
  );
}

function Wrench() {
  return (
    <Icon size={9}>
      <path d="M1 4l3-3h3v4l2 2.500L7.500 9 5 7H2z" fill="#17344c" />
      <path d="M4.500 1.200c1.800-.2 3 .8 2.800 2.500v1.500L9 7.300 7.500 9 5.500 6.500C3.500 7 1.800 6.300 1.500 4.500l2.300.5 1.400-1.500z" fill="#8db4d6" />
    </Icon>
  );
}

function Swatch({ className }: { className: string }) {
  return <span className={`h-[2px] w-[17px] shrink-0 ${className}`} />;
}

function CloseX() {
  return <Icon size={10}><path d="M1.500 1.500l7 7M8.500 1.500l-7 7" stroke="#c8c8c8" strokeWidth="2.200" /></Icon>;
}

function LeftRail() {
  return (
    <aside className="flex w-[14px] shrink-0 flex-col pl-[3px]">
      <div className="flex h-[296px] w-[9px] flex-col bg-[#1c1c1c]">
        <Icon size={9}><path d="M0 0h9v9H0z" fill="#c9c9c9" /><path d="M4.500 2L8 6.500H1z" fill="#102040" /></Icon>
        <div className="mt-[92px] flex h-[96px] flex-col justify-between bg-[#424242]">
          <div className="h-[5px] border-y border-[#ddd] bg-[#777]" />
          <div className="h-[5px] border-y border-[#ddd] bg-[#777]" />
        </div>
        <div className="mt-auto"><Icon size={9}><path d="M0 0h9v9H0z" fill="#c9c9c9" /><path d="M4.500 7L1 3h7z" fill="#102040" /></Icon></div>
      </div>
      <svg width="10" height="15" viewBox="0 0 10 15" className="mt-[3px]">
        <path d="M1 4V2.500L2.500 1h4L8 2.500V7" fill="none" stroke="#d0d0d0" strokeWidth="1.800" />
        <path d="M0 6h9v8H0z" fill="#d6d6d6" /><path d="M4 9h1.500v3H4z" fill="#333" />
      </svg>
      <div className="mt-[6px]"><CloseX /></div>
      <div className="mt-[64px]"><CloseX /></div>
    </aside>
  );
}

function TimeScroller() {
  return (
    <footer className="flex h-[9px] shrink-0">
      <Icon size={9}><path d="M0 0h9v9H0z" fill="#c9c9c9" /><path d="M2 4.500L6.500 1v7z" fill="#102040" /></Icon>
      <div className="grid w-[1002px] overflow-hidden bg-[#1d1d1d]">
        <div className="col-start-1 row-start-1 ml-[241px] flex w-[354px] justify-between bg-[#343434]">
          <span className="w-[4px] border-x border-[#eee] bg-[#555]" />
          <span className="w-[4px] border-x border-[#eee] bg-[#555]" />
        </div>
        <div className="col-start-1 row-start-1 flex h-[9px] pl-[30px] font-['Liberation_Serif',serif] text-[10.5px] leading-[11px] tracking-[-0.2px] whitespace-nowrap text-[#8c8c8c]">
          <span className="w-[139px]">'Aug 5</span>
          <span className="w-[151px]">'Aug 19</span>
          <span className="w-[155px]">'Sep 2</span>
          <span className="w-[155px]">'Sep 16</span>
          <span className="w-[155px]">'Sep 30</span>
          <span className="w-[155px]">'Oct 14</span>
          <span>'Oct 28</span>
        </div>
      </div>
      <Icon size={9}><path d="M0 0h9v9H0z" fill="#c9c9c9" /><path d="M7 4.500L2.500 1v7z" fill="#102040" /></Icon>
    </footer>
  );
}

export default function App() {
  return (
    <main className="flex h-[571px] w-[1024px] flex-col overflow-hidden border-2 border-b-3 border-[#474747] bg-black font-['DejaVu_Sans',sans-serif] text-[#eee]">
      <TitleBar />
      <Toolbar />
      <div className="-mt-px flex h-[519px] shrink-0">
        <LeftRail />
        <section className="relative h-[520px] w-[1004px]">
          <Chart />
          <div className="absolute top-[254px] left-[817px] flex h-[45px] w-[169px] flex-col bg-[#333]/65 pl-[8px] text-[10px] whitespace-nowrap">
            <div className="flex h-[16px] items-center">
              <b className="w-[146px] font-['Noto_Sans',sans-serif] text-[10px] tracking-[0.15px]">ES DEC'13 Futures@GLOBEX</b>
              <Wrench />
            </div>
            <div className="flex h-[12px] items-center">
              <span className="flex w-[22px] gap-[3px]"><i className="h-[2px] w-[7px] bg-[#666]" /><i className="h-[2px] w-[7px] bg-[#666]" /></span>
              <span className="w-[61px] tracking-[0.25px]">Prior Close</span>
              <Check on={false} />
            </div>
            <div className="flex h-[17px] items-center">
              <Swatch className="mr-[5px] bg-[#ff99ff]" />
              <span className="w-[60px] tracking-[0.3px]">WMA(135)</span>
              <Check />
              <span className="ml-[6px]"><Wrench /></span>
            </div>
          </div>
          <div className="absolute top-[320px] left-[71px] flex h-[13px] w-[53px] items-center justify-center bg-[#222] font-['Noto_Sans',sans-serif] text-[10px] font-bold">Volume</div>
          <div className="absolute top-[395px] left-[71px] flex h-[14px] w-[429px] items-center bg-[#222]/90 pl-[7px] text-[9.5px] tracking-[0.6px] whitespace-nowrap">
            <b className="w-[45px] font-['Noto_Sans',sans-serif] text-[10px] tracking-normal">MACD</b>
            <span className="w-[118px]">(7, 20, 7 - EMA, EMA)</span>
            <Wrench />
            <Swatch className="mr-[4px] ml-[20px] bg-[#ffa092]" />
            <span className="w-[38px] tracking-[1px]">MACD</span>
            <Check />
            <Swatch className="mr-[4px] ml-[6px] bg-[#ff99ff]" />
            <span className="w-[38px] tracking-[1.2px]">OSMA</span>
            <Check />
            <Swatch className="mr-[4px] ml-[6px] bg-[#f230c8]" />
            <span className="w-[47px] tracking-[1.1px]">SIGNAL</span>
            <Check />
          </div>
        </section>
      </div>
      <TimeScroller />
    </main>
  );
}
